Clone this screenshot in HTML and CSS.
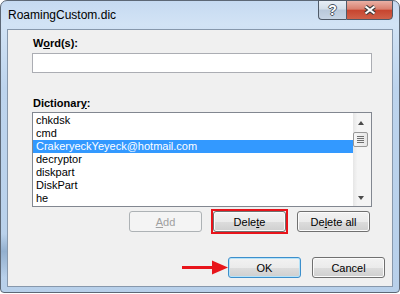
FILE: index.html
```html
<!DOCTYPE html>
<html lang="en">
  <head>
    <meta charset="UTF-8" />
    <meta name="viewport" content="width=device-width, initial-scale=1.0" />
    <title>RoamingCustom.dic</title>
    <link rel="stylesheet" href="styles.css">
  </head>
  <body>
    <div class="window">
      <div class="titlebar">
        <span class="title">RoamingCustom.dic</span>
        <div class="caption-btns">
          <span class="cap-btn help">?</span>
          <span class="cap-btn close">
            <svg width="14" height="10" viewBox="0 0 14 10">
              <path d="M2.5 1.5 L11.5 8.5 M11.5 1.5 L2.5 8.5" stroke="#3b3b3b" stroke-width="4.2" />
              <path d="M2.5 1.5 L11.5 8.5 M11.5 1.5 L2.5 8.5" stroke="#ffffff" stroke-width="2.2" />
            </svg>
          </span>
        </div>
      </div>

      <div class="content">
        <div class="fields">
          <label class="field-label">W<u>o</u>rd(s):</label>
          <input type="text" class="text-input" />

          <label class="field-label dict-label">Dictionar<u>y</u>:</label>
          <div class="listbox">
            <ul class="items">
              <li>chkdsk</li>
              <li>cmd</li>
              <li class="selected">CrakeryeckYeyeck@hotmail.com</li>
              <li>decryptor</li>
              <li>diskpart</li>
              <li>DiskPart</li>
              <li>he</li>
            </ul>
            <div class="scrollbar">
              <div class="arrow-box"><span class="arrow-up"></span></div>
              <div class="thumb"><span class="grip"></span></div>
              <div class="track"></div>
              <div class="arrow-box"><span class="arrow-down"></span></div>
            </div>
          </div>

          <div class="btn-row">
            <button class="btn disabled"><u>A</u>dd</button>
            <span class="mark"><button class="btn">Dele<u>t</u>e</button></span>
            <button class="btn">De<u>l</u>ete all</button>
          </div>
        </div>

        <div class="footer">
          <svg class="pointer" width="47" height="21" viewBox="0 0 47 21">
            <rect x="1" y="9" width="32" height="3" fill="#e8151b" />
            <polygon points="31,3.5 47,10.5 31,17.5" fill="#e8151b" />
          </svg>
          <button class="btn default">OK</button>
          <button class="btn cancel">Cancel</button>
        </div>
      </div>
    </div>
  </body>
</html>
```

FILE: styles.css
```css
body {
  margin: 0;
  background-color: #ffffff;
  font-family: "Liberation Sans", Arial, sans-serif;
  font-size: 11px;
  color: #000000;
}

.window {
  width: 400px;
  height: 293px;
  box-sizing: border-box;
  border: 1px solid #5d6876;
  border-radius: 7px 7px 4px 4px;
  padding: 0 6px 5px;
  display: flex;
  flex-direction: column;
  background:
    linear-gradient(180deg, transparent 80%, #93b0cf 86%, #a7c1dd 91%, transparent 95%) left top / 6px 100% no-repeat,
    linear-gradient(180deg, #c6daf1 0%, #d2e3f5 8%, #bdd4ed 30%, #b8d0ea 100%);
}

.titlebar {
  height: 28px;
  display: flex;
  align-items: flex-start;
  justify-content: space-between;
}

.title {
  font-size: 12px;
  line-height: 28px;
  padding-left: 1px;
  color: #000000;
}

.caption-btns {
  display: flex;
  margin-top: -1px;
}

.cap-btn {
  height: 20px;
  box-sizing: border-box;
  border: 1px solid #4f5a68;
  display: flex;
  align-items: center;
  justify-content: center;
}

.help {
  width: 28px;
  border-right: none;
  border-radius: 0 0 0 4px;
  background: linear-gradient(180deg, #e7eef6 0%, #d3dee9 45%, #b9c8da 50%, #c6d4e4 100%);
  font-size: 14px;
  font-weight: bold;
  color: #ffffff;
  text-shadow: 1px 0 0 #4b5562, -1px 0 0 #4b5562, 0 1px 0 #4b5562, 0 -1px 0 #4b5562;
}

.close {
  width: 47px;
  border-radius: 0 0 4px 0;
  background: linear-gradient(180deg, #e9b0a5 0%, #d9806f 45%, #c7452f 52%, #d06149 100%);
}

.content {
  flex: 1;
  background-color: #f0f0f0;
  border: 1px solid #8798ac;
  padding-top: 6px;
  display: flex;
  flex-direction: column;
}

.fields {
  padding: 0 20px 0 24px;
  display: flex;
  flex-direction: column;
}

.field-label {
  font-weight: bold;
  line-height: 15px;
  padding-left: 1px;
}

.dict-label {
  margin-top: 23px;
}

.text-input {
  margin: 2px 0 0;
  height: 20px;
  box-sizing: border-box;
  border: 1px solid #abadb3;
  padding: 0 3px;
  background-color: #ffffff;
  font: 11px "Liberation Sans", Arial, sans-serif;
  outline: none;
}

.listbox {
  margin-top: 1px;
  height: 95px;
  box-sizing: border-box;
  border: 1px solid #828790;
  background-color: #ffffff;
  display: flex;
}

.items {
  flex: 1;
  list-style: none;
  margin: 0;
  padding: 1px 0 0;
  overflow: hidden;
}

.items li {
  height: 13px;
  line-height: 13px;
  padding-left: 3px;
  white-space: nowrap;
}

.items li.selected {
  background-color: #3399ff;
  color: #ffffff;
}

.scrollbar {
  width: 18px;
  display: flex;
  flex-direction: column;
  background: linear-gradient(90deg, #e6e6e6 0%, #f4f4f4 25%, #f4f4f4 100%);
}

.arrow-box {
  height: 17px;
  display: flex;
  align-items: center;
  justify-content: center;
  padding-right: 2px;
}

.arrow-up {
  width: 0;
  height: 0;
  border-left: 3.5px solid transparent;
  border-right: 3.5px solid transparent;
  border-bottom: 4px solid #4a4a4a;
  margin-top: 3px;
}

.arrow-down {
  width: 0;
  height: 0;
  border-left: 3.5px solid transparent;
  border-right: 3.5px solid transparent;
  border-top: 4px solid #4a4a4a;
  margin-top: 1px;
}

.thumb {
  margin-top: 2px;
  width: 15px;
  height: 15px;
  box-sizing: border-box;
  border: 1px solid #979797;
  border-radius: 2px;
  background: linear-gradient(90deg, #f6f6f6 0%, #e6e6e6 100%);
  display: flex;
  align-items: center;
  justify-content: center;
}

.grip {
  width: 7px;
  height: 7px;
  background: repeating-linear-gradient(180deg, #6e6e6e 0, #6e6e6e 1px, transparent 1px, transparent 2px);
}

.track {
  flex: 1;
}

.btn-row {
  margin-top: 4px;
  display: flex;
  justify-content: flex-end;
  gap: 11px;
  padding-right: 2px;
}

.btn {
  width: 73px;
  height: 21px;
  box-sizing: border-box;
  border: 1px solid #707070;
  border-radius: 3px;
  padding: 0;
  background: linear-gradient(180deg, #f2f2f2 0%, #ebebeb 50%, #dddddd 51%, #cfcfcf 100%);
  box-shadow: inset 0 0 0 1px #fbfbfb;
  font: 11px "Liberation Sans", Arial, sans-serif;
  color: #000000;
}

.btn.disabled {
  border-color: #adb2b5;
  background: #f4f4f4;
  box-shadow: none;
  color: #a0a0a0;
}

.mark {
  display: flex;
  margin: -2px;
  border: 2px solid #e8141b;
}

.btn.default {
  border-color: #3c8fcc;
  box-shadow: inset 0 0 0 1px #b5e2f8;
}

.footer {
  margin-top: 25px;
  display: flex;
  justify-content: flex-end;
  align-items: center;
  padding-right: 7px;
}

.cancel {
  margin-left: 11px;
}
```
